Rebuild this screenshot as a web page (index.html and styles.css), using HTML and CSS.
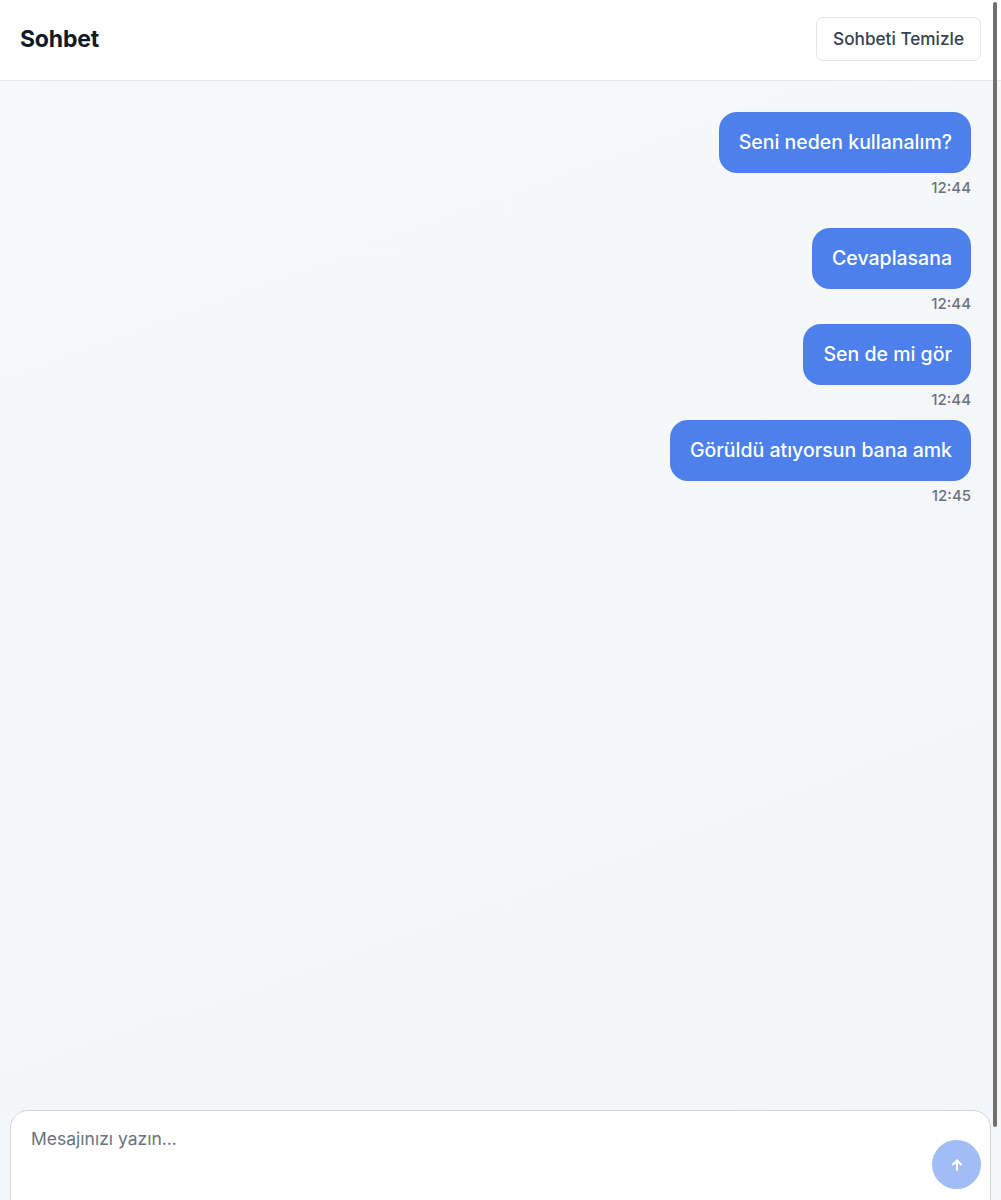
FILE: index.html
```html
<!DOCTYPE html>
<html lang="tr">
<head>
<meta charset="utf-8">
<title>Sohbet</title>
<link rel="stylesheet" href="styles.css">
</head>
<body>
<div class="app">
  <header class="header">
    <h1 class="title">Sohbet</h1>
    <button class="clear-btn" type="button">Sohbeti Temizle</button>
  </header>
  <main class="messages">
    <div class="msg msg-first">
      <div class="bubble">Seni neden kullanalım?</div>
      <div class="time">12:44</div>
    </div>
    <div class="msg">
      <div class="bubble">Cevaplasana</div>
      <div class="time">12:44</div>
    </div>
    <div class="msg">
      <div class="bubble">Sen de mi gör</div>
      <div class="time">12:44</div>
    </div>
    <div class="msg">
      <div class="bubble">Görüldü atıyorsun bana amk</div>
      <div class="time">12:45</div>
    </div>
  </main>
  <footer class="composer">
    <div class="input-box">
      <div class="placeholder">Mesajınızı yazın...</div>
      <button class="send-btn" type="button" aria-label="Gönder">
        <svg width="16" height="16" viewBox="0 0 16 16" fill="none" stroke="#ffffff" stroke-width="2" stroke-linecap="round" stroke-linejoin="round"><path d="M8 13V3.5"/><path d="M4 7.5L8 3.5L12 7.5"/></svg>
      </button>
    </div>
  </footer>
</div>
<div class="scroll-thumb"></div>
</body>
</html>
```
FILE: styles.css
```css
* { box-sizing: border-box; }
html, body { margin: 0; padding: 0; }
body {
  font-family: Inter, "Noto Sans", "Liberation Sans", sans-serif;
  background: #f5f6f8;
  color: #111827;
  overflow: hidden;
}
.app {
  display: flex;
  flex-direction: column;
  width: 1001px;
}
.header {
  height: 81px;
  background: #ffffff;
  border-bottom: 1px solid #e5e7eb;
  display: flex;
  align-items: center;
  justify-content: space-between;
  padding: 0 20px;
}
.title {
  margin: 0 0 2px 0;
  font-size: 23px;
  font-weight: 700;
  color: #111827;
  letter-spacing: -0.2px;
}
.clear-btn {
  height: 44px;
  padding: 0 16px;
  border: 1px solid #e3e5e9;
  border-radius: 7px;
  background: #ffffff;
  font-family: inherit;
  font-size: 17.2px;
  font-weight: 500;
  color: #374151;
  margin-top: -3px;
}
.messages {
  height: 1029px;
  background: linear-gradient(160deg, #f7f8fa 0%, #f4f5f7 100%);
  padding: 31px 30px 0 30px;
  display: flex;
  flex-direction: column;
  align-items: flex-end;
}
.msg {
  display: flex;
  flex-direction: column;
  align-items: flex-end;
  margin-bottom: 11px;
}
.msg-first { margin-bottom: 31px; }
.bubble {
  background: #4d80ea;
  color: #ffffff;
  font-size: 19.5px;
  font-weight: 500;
  line-height: 25px;
  padding: 18px 19px 18px 20px;
  border-radius: 18px;
}
.time {
  margin-top: 6px;
  font-size: 15px;
  font-weight: 500;
  color: #6b7280;
  line-height: 18px;
}
.composer {
  padding: 0 10px;
  background: #f5f6f8;
}
.input-box {
  height: 120px;
  background: #ffffff;
  border: 1px solid #d1d5db;
  border-radius: 18px;
  padding: 17px 9px 0 20px;
  display: flex;
  justify-content: space-between;
  align-items: flex-start;
}
.placeholder {
  font-size: 17.5px;
  color: #6b7280;
  line-height: 22px;
}
.send-btn {
  margin-top: 12px;
  width: 49px;
  height: 49px;
  border-radius: 50%;
  border: none;
  background: #a2bdf6;
  display: flex;
  align-items: center;
  justify-content: center;
  padding: 0;
}
.scroll-thumb {
  position: fixed;
  top: 2px;
  left: 993px;
  width: 4px;
  height: 1125px;
  border-radius: 2px;
  background: #707070;
}
```
